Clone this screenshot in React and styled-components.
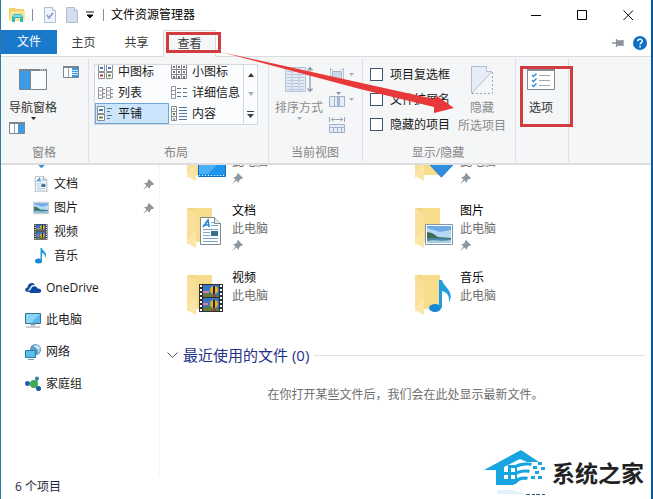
import { useState } from "react";
import styled, { createGlobalStyle } from "styled-components";

const galleryItems = [
  { name: "中图标", icon: "medium" },
  { name: "小图标", icon: "small" },
  { name: "列表", icon: "list" },
  { name: "详细信息", icon: "details" },
  { name: "平铺", icon: "tiles" },
  { name: "内容", icon: "content" },
];

const quickAccess = [
  { id: "download", icon: "download" },
  { id: "document", name: "文档", icon: "document", pinned: true },
  { id: "picture", name: "图片", icon: "picture", pinned: true },
  { id: "video", name: "视频", icon: "video" },
  { id: "music", name: "音乐", icon: "music" },
];

const places = [
  { id: "cloud", name: "OneDrive", icon: "cloud" },
  { id: "computer", name: "此电脑", icon: "computer" },
  { id: "network", name: "网络", icon: "network" },
  { id: "homegroup", name: "家庭组", icon: "homegroup" },
];

// the names of the first two are scrolled out of view
const folders = [
  { id: "desktop", icon: "desktop", pinned: true },
  { id: "download", icon: "download", pinned: true },
  { id: "document", name: "文档", icon: "document", pinned: true },
  { id: "picture", name: "图片", icon: "picture", pinned: true },
  { id: "video", name: "视频", icon: "video" },
  { id: "music", name: "音乐", icon: "music" },
];

const App = () => {
  const [view, setView] = useState("平铺");

  return (
    <>
      <GlobalStyle />
      <Window>
        <TitleBar>
          <AppIcon />
          <Separator />
          <QuickButton aria-label="属性"><PageIcon checked /></QuickButton>
          <QuickButton aria-label="新建文件夹"><PageIcon /></QuickButton>
          <QuickMore aria-label="自定义快速访问工具栏">
            <svg width="8" height="8" viewBox="0 0 8 8">
              <path d="M0 1h8M1 4h6L4 7z" fill="#111" stroke="#111" strokeWidth="1" />
            </svg>
          </QuickMore>
          <Separator />
          <Title>文件资源管理器</Title>
          <WindowButton aria-label="最小化">
            <svg width="11" height="11"><path d="M0 5.500h10" stroke="#000" /></svg>
          </WindowButton>
          <WindowButton aria-label="最大化">
            <svg width="11" height="11"><path d="M.5 .5h9v9h-9z" fill="none" stroke="#000" /></svg>
          </WindowButton>
          <WindowButton aria-label="关闭">
            <svg width="11" height="11"><path d="M.5 .5l9.500 9.500M10 .5L.5 10" stroke="#000" /></svg>
          </WindowButton>
        </TitleBar>

        <Tabs>
          <FileTab>文件</FileTab>
          <Tab>主页</Tab>
          <Tab>共享</Tab>
          <Tab $active>
            查看
            <TabMark />
          </Tab>
          <TabTools>
            <ToolButton aria-label="固定功能区">
              <svg width="12" height="10" viewBox="0 0 12 10">
                <path d="M0 5h4M5 3v4h5V3zM4.500 1v8M11 2v6" fill="#8b9298" stroke="#8b9298" strokeWidth="1.300" />
              </svg>
            </ToolButton>
            <ToolButton aria-label="帮助">
              <svg width="14" height="14" viewBox="0 0 14 14">
                <circle cx="7" cy="7" r="7" fill="#0f6fc6" />
                <path d="M4.800 5.300C4.800 2.600 9.300 2.600 9.300 5.200 9.300 6.700 7.100 6.700 7.100 8.500M7.100 9.800v1.600" fill="none" stroke="#fff" strokeWidth="1.500" />
              </svg>
            </ToolButton>
          </TabTools>
        </Tabs>

        <Ribbon>
          <Group $left={8} $right={9}>
            <GroupBody $gap={6}>
              <Column>
                <LargeButton>
                  <IconBox><PaneIcon large /></IconBox>
                  导航窗格
                  <DownArrow color="#222" />
                </LargeButton>
                <SmallButton aria-label="详细信息窗格"><PaneIcon side="right" /></SmallButton>
              </Column>
              <PreviewButton aria-label="预览窗格"><PaneIcon side="lines" /></PreviewButton>
            </GroupBody>
            <GroupLabel>窗格</GroupLabel>
          </Group>

          <Group $left={5} $right={10}>
            <GroupBody>
              <Gallery>
                <GalleryGrid>
                  {galleryItems.map((item) => (
                    <GalleryItem
                      key={item.name}
                      $selected={view === item.name}
                      onClick={() => setView(item.name)}
                    >
                      <LayoutIcon type={item.icon} />
                      {item.name}
                    </GalleryItem>
                  ))}
                </GalleryGrid>
                <GalleryScroll>
                  <ScrollButton aria-label="向上"><svg width="6" height="4"><path d="M0 4L3 0l3 4z" fill="#333" /></svg></ScrollButton>
                  <ScrollButton aria-label="向下"><svg width="6" height="4"><path d="M0 0h6L3 4z" fill="#a9adb2" /></svg></ScrollButton>
                  <ScrollButton aria-label="更多"><svg width="7" height="7"><path d="M0 0h7v1H0zM0 3h7L3.500 7z" fill="#2f4258" /></svg></ScrollButton>
                </GalleryScroll>
              </Gallery>
            </GroupBody>
            <GroupLabel>布局</GroupLabel>
          </Group>

          <Group $left={6} $right={7}>
            <GroupBody $gap={6}>
              <LargeButton $muted>
                <IconBox><SortIcon /></IconBox>
                排序方式
                <DownArrow color="#a9adb2" />
              </LargeButton>
              <Rows>
                <RowButton aria-label="分组依据"><GroupByIcon /><DownArrow color="#a9adb2" /></RowButton>
                <RowButton aria-label="添加列"><AddColumnIcon /><DownArrow color="#a9adb2" /></RowButton>
                <RowButton aria-label="将所有列调整为合适的大小"><FitColumnsIcon /></RowButton>
              </Rows>
            </GroupBody>
            <GroupLabel>当前视图</GroupLabel>
          </Group>

          <Group $left={7} $right={9}>
            <GroupBody $gap={8}>
              <Rows>
                <CheckLabel><CheckBox type="checkbox" />项目复选框</CheckLabel>
                <CheckLabel><CheckBox type="checkbox" />文件扩展名</CheckLabel>
                <CheckLabel><CheckBox type="checkbox" />隐藏的项目</CheckLabel>
              </Rows>
              <LargeButton $muted>
                <IconBox><HideIcon /></IconBox>
                <span>隐藏</span>
                <span>所选项目</span>
              </LargeButton>
            </GroupBody>
            <GroupLabel>显示/隐藏</GroupLabel>
          </Group>

          <Group $left={11} $right={13}>
            <GroupBody>
              <LargeButton>
                <IconBox><OptionsIcon /></IconBox>
                选项
                <OptionsMark />
              </LargeButton>
            </GroupBody>
          </Group>
          <Pointer width="234" height="66" viewBox="0 0 234 66">
            <path d="M0 0L213 47 216 44 233 56 213 61 213 55 139 37z" fill="#e8383a" />
          </Pointer>
        </Ribbon>

        <Content>
          <Sidebar>
            <SideList>
              {quickAccess.map((item) => (
                <SideItem key={item.id} $nested>
                  <SideIcon type={item.icon} />
                  <SideName>{item.name}</SideName>
                  {item.pinned && <PinIcon />}
                </SideItem>
              ))}
              {places.map((item) => (
                <SideItem key={item.id}>
                  <SideIcon type={item.icon} />
                  <SideName>{item.name}</SideName>
                </SideItem>
              ))}
            </SideList>
          </Sidebar>
          <Main>
            <Tiles>
              {folders.map((item) => (
                <Tile key={item.id}>
                  <FolderIcon type={item.icon} />
                  <TileText>
                    <TileName>{item.name}</TileName>
                    <TilePlace>此电脑</TilePlace>
                    {item.pinned && <PinIcon />}
                  </TileText>
                </Tile>
              ))}
            </Tiles>
            <Section>
              <svg width="11" height="7" viewBox="0 0 11 7">
                <path d="M.5 .5l5 5 5-5" fill="none" stroke="#555" />
              </svg>
              <SectionTitle>最近使用的文件 (0)</SectionTitle>
              <Rule />
            </Section>
            <Empty>在你打开某些文件后，我们会在此处显示最新文件。</Empty>
          </Main>
        </Content>
        <Status>6 个项目</Status>
        <Watermark>
          <HouseLogo />
          系统之家
        </Watermark>
      </Window>
    </>
  );
};

const DownArrow = ({ color }) => (
  <svg width="7" height="4" viewBox="0 0 7 4"><path d="M1 0h5L3.500 3z" fill={color} /></svg>
);

const AppIcon = () => (
  <svg width="16" height="16" viewBox="0 0 16 16">
    <path d="M0 1h6l1 1h8v12H0z" fill="#f1cf69" />
    <path d="M2 4h14v10H0z" fill="#fbe394" />
    <path d="M3 15V9l2-2h7l2 2v6h-3v-4H6v4z" fill="#2fb4cc" />
    <path d="M4 8h9v2H4z" fill="#7fdbe4" />
  </svg>
);

const PageIcon = ({ checked }) => (
  <svg width="12" height="16" viewBox="0 0 12 16">
    <path d="M.5 .5h8l3 3v12H.5z" fill={checked ? "#eef3fb" : "#d3dff0"} stroke="#b3bfd1" />
    <path d="M8.500 .5v3h3" fill="#fff" stroke="#b3bfd1" />
    {checked && <path d="M3 8l2 3 4-5" fill="none" stroke="#7b9ac6" strokeWidth="1.500" />}
  </svg>
);

const PaneIcon = ({ large, side }) => {
  if (large) {
    return (
      <svg width="28" height="22" viewBox="0 0 28 22">
        <path d="M.5 .5h27v20H.5z" fill="#fbfcfd" stroke="#7d858c" />
        <path d="M0 0h28v2H0z" fill="#7d858c" />
        <path d="M21 1h1m1 0h1m1 0h1" stroke="#fff" />
        <path d="M1 2h10v18H1z" fill="#3c9be6" />
        <path d="M11.500 2v18" stroke="#7d858c" />
      </svg>
    );
  }
  return (
    <svg width="16" height="12" viewBox="0 0 16 12">
      <path d="M.5 .5h15v11H.5z" fill="#fff" stroke="#7d858c" />
      <path d="M0 0h16v2H0z" fill="#7d858c" />
      <path d="M5.500 2v9" stroke="#9aa1a7" />
      <path d="M9 2h6v9H9z" fill="#3c9be6" />
      {side === "lines" && <path d="M9 4.500h6M9 6.500h6M9 8.500h6" stroke="#d5eafc" />}
    </svg>
  );
};

const LayoutIcon = ({ type }) => (
  <svg width="16" height="16" viewBox="0 0 16 16">
    {type === "medium" && (
      <g fill="#fff" stroke="#8a8f94">
        <path d="M1.500 .5h6v7h-6zM9.500 .5h6v7h-6zM1.500 8.500h6v6h-6zM9.500 8.500h6v6h-6z" />
        <path d="M3 4h3M11 4h3" stroke="#3579b8" strokeWidth="2" />
        <path d="M3 11.500h3" stroke="#b5372e" strokeWidth="2" />
        <path d="M11 11.500h3" stroke="#5a8a35" strokeWidth="2" />
      </g>
    )}
    {type === "small" && (
      <g fill="#fff" stroke="#85898e">
        <path d="M.5 .5h15v14H.5zM5.500 .5v14M10.500 .5v14M.5 5.500h15M.5 10.500h15" />
        <path d="M2 3h2M7 3h2M12 3h2M2 8h2M7 8h2M12 8h2M2 13h2M7 13h2M12 13h2" stroke="#444" strokeWidth="1.500" />
      </g>
    )}
    {type === "list" && (
      <g fill="#fff" stroke="#92969a">
        <path d="M1.500 2.500h4v11h-4zM9.500 2.500h4v11h-4zM1.500 6h4M1.500 10h4M9.500 6h4M9.500 10h4" />
        <path d="M6 4.500h2M6 8.500h2M6 12h2M14 4.500h2M14 8.500h2M14 12h2" stroke="#777" />
      </g>
    )}
    {type === "details" && (
      <g fill="#fff" stroke="#92969a">
        <path d="M.5 1.500h4v12h-4zM.5 5.500h4M.5 9.500h4" />
        <path d="M6 3.500h4M12 3.500h4M6 7.500h4M12 7.500h4M6 11.500h4M12 11.500h4" stroke="#607890" />
      </g>
    )}
    {type === "tiles" && (
      <g fill="#fff" stroke="#858a8f">
        <path d="M.5 .5h7v7h-7zM.5 8.500h7v6h-7z" />
        <path d="M2 4h4" stroke="#3579b8" strokeWidth="2" />
        <path d="M2 11.500h4" stroke="#5a8a35" strokeWidth="2" />
        <path d="M10 2.500h5M10 5.500h3M10 9.500h5M10 12.500h3" stroke="#53789c" />
      </g>
    )}
    {type === "content" && (
      <g fill="#fff" stroke="#858a8f">
        <path d="M.5 .5h5v14h-5zM.5 5.500h5M.5 10.500h5" />
        <path d="M2 3h2M2 13h2" stroke="#555" />
        <path d="M2 8h2" stroke="#5a8a35" strokeWidth="2" />
        <path d="M8 1.500h8M8 4.500h8M8 7.500h8M8 10.500h8M8 13.500h8" stroke="#53789c" />
      </g>
    )}
  </svg>
);

const SortIcon = () => (
  <svg width="28" height="28" viewBox="0 0 28 28">
    <path d="M.5 1.500h20v24H.5z" fill="#e3ebf5" stroke="#b3c1d6" />
    <path d="M7 1v25M14 1v25" stroke="#b3c1d6" />
    <path d="M2 5.500h4m2 0h5m2 0h4M2 8.500h4m2 0h5m2 0h4M2 11.500h4m2 0h5m2 0h4M2 14.500h4m2 0h5m2 0h4M2 17.500h4m2 0h5m2 0h4M2 20.500h4m2 0h5m2 0h4M2 23.500h4m2 0h5m2 0h4" stroke="#b3c4dc" />
    <path d="M25 2v23M22.500 4.500L25 1.500l2.500 3M22.500 22.500l2.500 3 2.500-3" fill="none" stroke="#8f9bac" strokeWidth="1.300" />
  </svg>
);

const GroupByIcon = () => (
  <svg width="16" height="14" viewBox="0 0 16 14">
    <path d="M1.500 0v13M14.500 0v13M1 1.500h3M1 11.500h3M12 1.500h3M12 11.500h3" fill="none" stroke="#b9c1cc" />
    <path d="M3.500 3.500h9v7h-9z" fill="#cbd9eb" stroke="#9fb2cd" />
  </svg>
);

const AddColumnIcon = () => (
  <svg width="16" height="16" viewBox="0 0 16 16">
    <path d="M.5 4.500h15v10H.5zM5.500 4.500v10M10.500 4.500v10" fill="#e6edf6" stroke="#9fb0c8" />
    <path d="M8 5h3v9H8z" fill="#a3b7d3" />
    <path d="M7 0h5L9.500 3z" fill="#7f93b0" />
  </svg>
);

const FitColumnsIcon = () => (
  <svg width="16" height="16" viewBox="0 0 16 16">
    <path d="M.5 0v5M15.500 0v5M2 2.500h12M4.500 .5l-2 2 2 2M11.500 .5l2 2-2 2" fill="none" stroke="#95a3b8" />
    <path d="M.5 7.500h15v8H.5zM.5 10.500h15M4.500 10v5M8.500 10v5M12.500 10v5" fill="#e6edf6" stroke="#9fb0c8" />
  </svg>
);

const HideIcon = () => (
  <svg width="22" height="28" viewBox="0 0 22 28">
    <path d="M.5 27V.5h15l6 5z" fill="#e6edf7" />
    <path d="M.5 27.500V.5h15l5 5.500L1 27" fill="none" stroke="#aebdd2" />
    <path d="M15.500 .5v5h5" fill="#fff" stroke="#aebdd2" />
    <path d="M1 27.500h20.500V6" fill="none" stroke="#9ea6b0" strokeDasharray="2 2" />
  </svg>
);

const OptionsIcon = () => (
  <svg width="28" height="22" viewBox="0 0 28 22">
    <path d="M.5 .5h27v20H.5z" fill="#fff" stroke="#858b91" />
    <path d="M0 0h28v2H0z" fill="#858b91" />
    <path d="M5 6l1.500 1.500 3-3M5 11l1.500 1.500 3-3M5 16l1.500 1.500 3-3" fill="none" stroke="#3a8fd6" strokeWidth="1.500" />
    <path d="M12 6.500h11M12 11.500h11M12 16.500h11" stroke="#a2a7ac" />
  </svg>
);

const PinIcon = () => (
  <svg width="11" height="11" viewBox="0 0 11 11">
    <path d="M6 0l5 5-1 1H8.500L7 8v2L4.500 7.500 0 11l3.500-4.500L1 4h2l2-1.500V1z" fill="#8d979f" />
  </svg>
);

const Note = () => (
  <>
    <ellipse cx="4.500" cy="13" rx="3.500" ry="2.500" fill="#1488d2" />
    <path d="M6.500 0H8c.5 3 6 4.500 3.500 10 0-3-1.500-4-3.500-5v8H6.500z" fill="#1e9ce4" />
  </>
);

const Download = () => (
  <path d="M6 0h5v8h5l-7.500 8L1 8h5z" fill="#2f8ee0" stroke="#1d72bd" strokeWidth=".5" />
);

const Photo = () => (
  <>
    <path d="M.5 .5h27v20H.5z" fill="#fff" stroke="#8395a8" />
    <path d="M2 2h24v17H2z" fill="#b5d8f4" />
    <path d="M2 2h24v4L15 8 2 4z" fill="#6faae6" />
    <path d="M2 8l5 1 6 4 13 1v2H2z" fill="#3e6f55" />
    <path d="M2 14l10 0 14 1v4H2z" fill="#4d86ac" />
    <path d="M2 17c8-2 14 1 24-1v3H2z" fill="#a8cfdd" />
  </>
);

const Film = () => (
  <>
    <path d="M0 0h24v28H0z" fill="#2c2f35" />
    <path d="M2 1v27M22 1v27" stroke="#fff" strokeWidth="2" strokeDasharray="2 2" />
    <path d="M4 1h16v12H4zM4 14h16v13H4z" fill="#3873c4" />
    <path d="M4 10l6-1 10 3v1H4zM4 24l5-2 11 3v2H4z" fill="#66793a" />
    <path d="M4 7h6v2H4zM4 19h5v2H4z" fill="#d984a5" />
    <circle cx="15" cy="6" r="4" fill="#e0b32e" />
    <circle cx="15" cy="20" r="4" fill="#e0b32e" />
    <path d="M15 2v8M15 16v8" stroke="#332414" strokeWidth="2" />
    <path d="M14 11h3v2h-3zM14 25h3v2h-3z" fill="#a8362c" />
  </>
);

const Sheet = () => (
  <>
    <path d="M.5 .5h14l6 6v21H.5z" fill="#fff" stroke="#7d8790" />
    <path d="M14.500 .5v6h6" fill="#e7ebee" stroke="#7d8790" />
    <path d="M3 10l5-7 1 7M4.500 8h4" fill="none" stroke="#2384c6" strokeWidth="1.600" />
    <path d="M11 5.500h3M11 8.500h7M3 12.500h15M3 15.500h7M3 18.500h7M3 21.500h15M3 24.500h15" stroke="#79a9ca" />
    <path d="M11 14h7v5h-7z" fill="#35718d" />
  </>
);

const SideIcon = ({ type }) => (
  <svg width="16" height="16" viewBox="0 0 16 16">
    {type === "download" && <Download />}
    {type === "document" && (
      <g transform="translate(2 0) scale(.58)"><Sheet /></g>
    )}
    {type === "picture" && (
      <g transform="translate(0 2) scale(.57)"><Photo /></g>
    )}
    {type === "video" && (
      <g transform="translate(1 0) scale(.56)"><Film /></g>
    )}
    {type === "music" && <g transform="translate(1 0)"><Note /></g>}
    {type === "cloud" && (
      <>
        <path d="M3 12C-1 12-.5 7.500 2.500 7.500 2.500 3 8 1.500 10 5 6.500 4.500 5 7 5 8.500 3.500 9 3 10.500 4 12z" fill="#154f9f" />
        <path d="M6 13C3.500 13 3.500 9.500 6 9.500 6 5.500 11.500 5 12.500 8.500 17 8 17 13 14 13z" fill="#0d47a1" />
      </>
    )}
    {type === "computer" && (
      <>
        <path d="M.5 1.500h15v10H.5z" fill="#56b8ef" stroke="#3a6f92" />
        <path d="M1 2h14L6 11H1z" fill="#8ad5fa" />
        <path d="M6 12h4v1H6zM1 15h14" fill="#9ab" stroke="#8f9ba4" />
      </>
    )}
    {type === "network" && (
      <>
        <circle cx="10.500" cy="5.500" r="5.500" fill="#5f9dc6" />
        <path d="M7 2c3 0 3 2 5 3s0 4 2 4l1-6-3-2z" fill="#c3e2f3" />
        <path d="M.5 6.500h10v7H.5z" fill="#59bdf0" stroke="#2e79a8" />
        <path d="M3 15.500h6" stroke="#7c99ab" />
      </>
    )}
    {type === "homegroup" && (
      <>
        <path d="M3 8l7-1 3-4M9 9l4 4" stroke="#5dab82" strokeWidth="1.500" />
        <circle cx="2.500" cy="7.500" r="2.500" fill="#1d65a8" />
        <circle cx="9" cy="8" r="4" fill="#3dab57" />
        <circle cx="12" cy="2.500" r="2" fill="#2b7fae" />
        <circle cx="13.500" cy="12.500" r="2.500" fill="#1b5a9c" />
      </>
    )}
  </svg>
);

const FolderIcon = ({ type }) => (
  <svg width="40" height="42" viewBox="0 0 40 42">
    <path d="M1 1h25v34H10L1 37z" fill="#f3d681" />
    <path d="M8 1h18v34H8z" fill="#f7dc8b" />
    <path d="M1 1l9 6v34l-9-5z" fill="#fbe6a5" />
    <path d="M1 1l9 6v16L1 33z" fill="#f9e09a" />
    {type === "desktop" && (
      <>
        <path d="M12.500 16.500h27v20h-27z" fill="#1e96ee" stroke="#1671b8" />
        <path d="M13 17h26L22 34h-9z" fill="#48b1f8" />
        <path d="M13 35.500h26" stroke="#fff" strokeDasharray="1 2" />
      </>
    )}
    {type === "download" && (
      <g transform="translate(13 10) scale(1.700)"><Download /></g>
    )}
    {type === "document" && <g transform="translate(14 10)"><Sheet /></g>}
    {type === "picture" && <g transform="translate(11 17)"><Photo /></g>}
    {type === "video" && <g transform="translate(13 10)"><Film /></g>}
    {type === "music" && (
      <>
        <ellipse cx="21" cy="34" rx="6" ry="4" fill="#1488d2" />
        <path d="M25 6h3c1 7 13 10 7 23 1-8-3-11-7-12v17h-3z" fill="#1e9ce4" />
      </>
    )}
  </svg>
);

const HouseLogo = () => (
  <svg width="62" height="46" viewBox="0 0 62 46">
    <g fill="#18a4e0">
      <path d="M0 20L37 0l18 12H43l-7-3-16 8v15h10v3H12V20z" />
      <path d="M24 15h7c4-2 8-3 17-2l-1 3c-6-1-10 0-15 2h-8zM20 22h11c4-2 8-3 15-2l-1 3c-6-1-9 0-13 2H20zM20 29h11c4-2 7-3 13-2l-1 3c-5-1-8 0-11 4H20z" />
      <path d="M24 15h3v18h-3zM31 16h2v17h-2z" />
      <path d="M49 16h4v3h-4zM54 12h4v3h-4zM51 21h4v3h-4zM57 17h4v3h-4zM47 26h4v3h-4zM54 26h4v3h-4z" />
    </g>
    <path d="M13 40h15l14 4H13z" fill="#e0f2fa" />
    <path d="M42 44.500h20" stroke="#2b5876" strokeDasharray="4 2 3 1" />
  </svg>
);

const GlobalStyle = createGlobalStyle`
* {
  box-sizing: border-box;
}
body {
  margin: 0;
  font-family: "Open Sans", "Noto Sans CJK SC", sans-serif;
  font-size: 12px;
  line-height: 18px;
  color: #1a1a1a;
  background: #fff;
}
button {
  display: flex;
  align-items: center;
  justify-content: center;
  padding: 0;
  border: 0;
  background: none;
  font: inherit;
  color: inherit;
}
svg {
  display: block;
  flex: none;
}
`;

const Window = styled.div`
  position: relative;
  display: flex;
  flex-direction: column;
  height: 100vh;
  overflow: hidden;
  background: #fff;
  border-left: 1px solid #2f7aa6;
  border-right: 2px solid #0a5c9e;
`;

const TitleBar = styled.header`
  display: flex;
  align-items: center;
  height: 30px;
  padding-left: 8px;
`;

const Separator = styled.span`
  width: 1px;
  height: 12px;
  margin: 0 7px;
  background: #8c8c8c;
`;

const QuickButton = styled.button`
  width: 20px;
  height: 22px;
  margin-right: 2px;
`;

const QuickMore = styled.button`
  width: 12px;
  height: 22px;
`;

const Title = styled.h1`
  flex: 1;
  margin: 0;
  font-size: 12px;
  font-weight: 400;
  color: #000;
`;

const WindowButton = styled.button`
  width: 46px;
  height: 30px;
`;

const Tabs = styled.nav`
  display: flex;
  height: 27px;
  border-bottom: 1px solid #dadbdc;
`;

const Tab = styled.button`
  position: relative;
  width: 53px;
  height: ${(p) => (p.$active ? "27px" : "26px")};
  color: #3b3b3b;
  background: ${(p) => (p.$active ? "#f5f6f7" : "none")};
  border: ${(p) => (p.$active ? "1px solid #dadbdc" : "0")};
  border-bottom: 0;
`;

const FileTab = styled.button`
  width: 56px;
  height: 24px;
  color: #fff;
  background: #1979ca;
`;

const RedMark = styled.span`
  position: absolute;
  border: 3px solid #d03c3f;
`;

const TabMark = styled(RedMark)`
  top: 1px;
  left: 2px;
  width: 55px;
  height: 21px;
`;

const TabTools = styled.div`
  display: flex;
  flex: 1;
  align-items: center;
  justify-content: flex-end;
  gap: 9px;
  padding-right: 4px;
`;

const ToolButton = styled.button`
  height: 16px;
`;

const Ribbon = styled.section`
  position: relative;
  z-index: 1;
  display: flex;
  flex: none;
  padding: 2px 0 1px;
  background: #f5f6f7;
  border-bottom: 2px solid #dcdddf;
`;

const Group = styled.div`
  display: flex;
  flex-direction: column;
  padding-left: ${(p) => p.$left}px;
  padding-right: ${(p) => p.$right}px;
  border-right: 1px solid #dfe1e4;
`;

const GroupBody = styled.div`
  display: flex;
  align-items: flex-start;
  gap: ${(p) => p.$gap || 0}px;
  height: 85px;
`;

const GroupLabel = styled.div`
  text-align: center;
  color: #858585;
`;

const Column = styled.div`
  display: flex;
  flex-direction: column;
  gap: 1px;
`;

const LargeButton = styled.button`
  position: relative;
  flex-direction: column;
  padding-top: 7px;
  color: ${(p) => (p.$muted ? "#8b8b8b" : "#333")};
`;

const IconBox = styled.span`
  display: flex;
  align-items: center;
  height: 28px;
  margin-bottom: 5px;
`;

const SmallButton = styled.button`
  align-self: flex-start;
`;

const PreviewButton = styled(SmallButton)`
  margin-top: 7px;
`;

const OptionsMark = styled(RedMark)`
  top: 7px;
  left: -7px;
  width: 53px;
  height: 61px;
`;

const Gallery = styled.div`
  display: flex;
  height: 61px;
  margin-top: 5px;
  background: #fbfcfd;
  border: 1px solid #d5d8dc;
`;

const GalleryGrid = styled.div`
  display: grid;
  grid-template-columns: 74px 74px;
  grid-auto-rows: 21px;
  align-content: end;
  overflow: hidden;
`;

const GalleryItem = styled.button`
  justify-content: flex-start;
  gap: 5px;
  padding-left: 2px;
  white-space: nowrap;
  background: ${(p) => (p.$selected ? "#cce4fc" : "none")};
  box-shadow: ${(p) => (p.$selected ? "inset 0 0 0 1px #6ea5d8" : "none")};
`;

const GalleryScroll = styled.div`
  display: grid;
  grid-template-rows: 1fr 1fr 1fr;
  width: 14px;
  border-left: 1px solid #d5d8dc;
`;

const ScrollButton = styled.button`
  width: 13px;
`;

const Rows = styled.div`
  display: grid;
  grid-auto-rows: 25px;
  padding-top: 3px;
`;

const RowButton = styled.button`
  justify-content: flex-start;
  gap: 3px;
`;

const CheckLabel = styled.label`
  display: flex;
  align-items: center;
  gap: 7px;
  white-space: nowrap;
`;

const CheckBox = styled.input`
  appearance: none;
  width: 13px;
  height: 13px;
  margin: 0;
  background: #fff;
  border: 1px solid #42566e;
  &:checked {
    background: #3c9be6;
  }
`;

const Pointer = styled.svg`
  position: absolute;
  top: -5px;
  left: 220px;
  pointer-events: none;
`;

const Content = styled.div`
  display: flex;
  flex: 1;
  min-height: 0;
  overflow: hidden;
`;

const Sidebar = styled.aside`
  flex: none;
  width: 159px;
  border-right: 1px solid #f4f4f4;
`;

/* both panes are scrolled a little, the first row is cut by the ribbon */
const SideList = styled.ul`
  margin: -17px 0 0;
  padding: 0;
  list-style: none;
`;

const SideItem = styled.li`
  display: flex;
  align-items: center;
  gap: 5px;
  height: 24px;
  margin-top: ${(p) => (p.$nested ? "0" : "8px")};
  padding: 0 5px 0 ${(p) => (p.$nested ? "32px" : "24px")};
`;

const SideName = styled.span`
  flex: 1;
`;

const Main = styled.main`
  flex: 1;
  min-width: 0;
`;

const Tiles = styled.div`
  display: grid;
  grid-template-columns: 228px 228px;
  grid-auto-rows: 67px;
  margin-top: -30px;
  padding-left: 26px;
`;

const Tile = styled.div`
  display: flex;
  gap: 6px;
  svg:first-child {
    margin-top: 5px;
  }
`;

const TileText = styled.div`
  display: flex;
  flex-direction: column;
`;

const TileName = styled.span`
  min-height: 18px;
  color: #000;
`;

const TilePlace = styled.span`
  margin-bottom: 2px;
  color: #6d6d6d;
`;

const Section = styled.div`
  display: flex;
  align-items: center;
  gap: 5px;
  height: 22px;
  margin-top: 8px;
  padding: 0 6px 0 7px;
`;

const SectionTitle = styled.h2`
  margin: 0;
  font-size: 15px;
  font-weight: 400;
  color: #1e3287;
`;

const Rule = styled.span`
  flex: 1;
  height: 1px;
  background: #e2e2e2;
`;

const Empty = styled.p`
  margin: 20px 0 0;
  text-align: center;
  color: #6d6d6d;
`;

const Status = styled.footer`
  height: 24px;
  padding: 3px 14px;
  color: #1e2a3a;
`;

const Watermark = styled.div`
  position: absolute;
  right: 7px;
  bottom: 3px;
  display: flex;
  align-items: center;
  gap: 6px;
  font-size: 23px;
  font-weight: 700;
  color: #222;
`;

export default App;
